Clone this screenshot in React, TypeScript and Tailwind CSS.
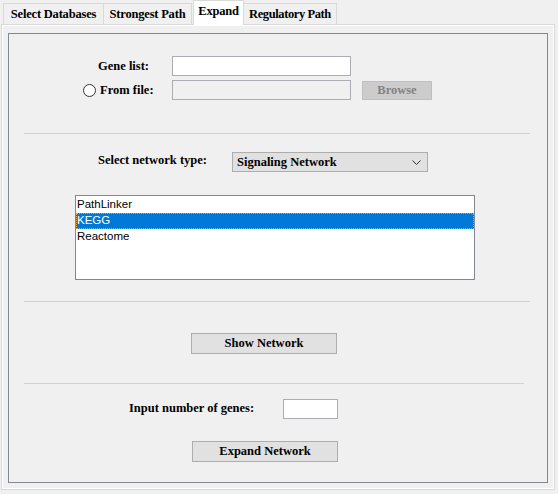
import React from "react";

const serif = { fontFamily: '"Liberation Serif", "Times New Roman", serif' };

function Btn({ label, className = "" }: { label: string; className?: string }) {
  return (
    <div
      className={`flex items-center justify-center border border-[#adadad] bg-[#e1e1e1] text-[12.5px] font-bold text-black ${className}`}
      style={serif}
    >
      {label}
    </div>
  );
}

function Sep({ className = "" }: { className?: string }) {
  return <div className={`h-px bg-[#d2d2d2] ${className}`} />;
}

export default function App() {
  return (
    <div className="relative h-[494px] w-[558px] overflow-hidden bg-[#f0f0f0]" style={serif}>
      {/* Tab strip */}
      <div className="flex h-[24px] items-end pl-[3px]">
        <div className="flex h-[21px] w-[101px] items-center justify-center whitespace-nowrap border border-b-0 border-[#d9d9d9] bg-[#f0f0f0] text-[12.5px] font-bold tracking-[-0.2px] text-black">
          Select Databases
        </div>
        <div className="-ml-px flex h-[21px] w-[89px] items-center justify-center whitespace-nowrap border border-b-0 border-[#d9d9d9] bg-[#f0f0f0] text-[12.5px] font-bold tracking-[-0.2px] text-black">
          Strongest Path
        </div>
        <div className="relative z-10 -mb-px ml-px flex h-[25px] w-[51px] items-center justify-center whitespace-nowrap border border-b-0 border-[#d9d9d9] bg-white text-[12.5px] font-bold tracking-[-0.2px] text-black">
          <span className="-mt-[3px]">Expand</span>
        </div>
        <div className="-ml-px flex h-[21px] w-[94px] items-center justify-center whitespace-nowrap border border-b-0 border-[#d9d9d9] bg-[#f0f0f0] text-[12.5px] font-bold tracking-[-0.4px] text-black">
          Regulatory Path
        </div>
      </div>

      {/* Tab panel */}
      <div className="ml-px h-[466px] w-[554px] border border-[#d9d9d9] bg-[#f0f0f0]">
        <div className="h-full w-full border border-white">
          <div className="ml-[5px] mt-[7px] h-[450px] w-[540px] border border-[#828790]">
            <div className="flex flex-col">
              {/* Gene list */}
              <div className="ml-[71px] mt-[22px] flex items-center">
                <div className="w-[92px] pl-[18px] text-[12.5px] font-bold">Gene list:</div>
                <div className="h-[20px] w-[179px] border border-[#abadb3] bg-white" />
              </div>
              <div className="ml-[71px] mt-[4px] flex items-center">
                <div className="flex w-[92px] items-center pl-[3px]">
                  <div className="h-[13px] w-[13px] rounded-full border border-[#333] bg-white" />
                  <span className="ml-[4px] text-[12.5px] font-bold">From file:</span>
                </div>
                <div className="h-[20px] w-[179px] border border-[#abadb3] bg-[#f0f0f0]" />
                <div className="ml-[11px] flex h-[19px] w-[70px] items-center justify-center border border-[#bfbfbf] bg-[#cccccc] text-[12.5px] font-bold text-[#838383]">
                  Browse
                </div>
              </div>

              <Sep className="ml-[15px] mt-[33px] w-[506px]" />

              {/* Network type */}
              <div className="ml-[89px] mt-[18px] flex items-center">
                <div className="w-[134px] -mt-[3px] text-[12.5px] font-bold">Select network type:</div>
                <div className="flex h-[20px] w-[196px] items-center justify-between border border-[#adadad] bg-[#e1e1e1] pl-[4px] pr-[6px]">
                  <span className="text-[12.5px] font-bold">Signaling Network</span>
                  <svg width="9" height="6" viewBox="0 0 9 6" className="mt-[2px]">
                    <path d="M0.5 0.5 L4.5 4.5 L8.5 0.5" fill="none" stroke="#333" strokeWidth="1" />
                  </svg>
                </div>
              </div>

              {/* Listbox */}
              <div
                className="ml-[66px] mt-[23px] h-[85px] w-[400px] border border-[#828790] bg-white pt-px text-[11.5px] text-black"
                style={{ fontFamily: '"Liberation Sans", Arial, sans-serif' }}
              >
                <div className="flex h-[16px] items-center pl-px">PathLinker</div>
                <div className="flex h-[16px] items-center border border-dotted border-[#f4a040] bg-[#0078d7] text-white">KEGG</div>
                <div className="flex h-[16px] items-center pl-px">Reactome</div>
              </div>

              <Sep className="ml-[15px] mt-[21px] w-[506px]" />

              <Btn label="Show Network" className="ml-[182px] mt-[31px] h-[21px] w-[146px]" />

              <Sep className="ml-[15px] mt-[29px] w-[500px]" />

              <div className="ml-[120px] mt-[15px] flex items-center">
                <div className="w-[154px] -mt-[2px] text-[12.5px] font-bold">Input number of genes:</div>
                <div className="h-[20px] w-[55px] border border-[#abadb3] bg-white" />
              </div>

              <Btn label="Expand Network" className="ml-[183px] mt-[22px] h-[21px] w-[146px]" />
            </div>
          </div>
        </div>
      </div>
    </div>
  );
}
